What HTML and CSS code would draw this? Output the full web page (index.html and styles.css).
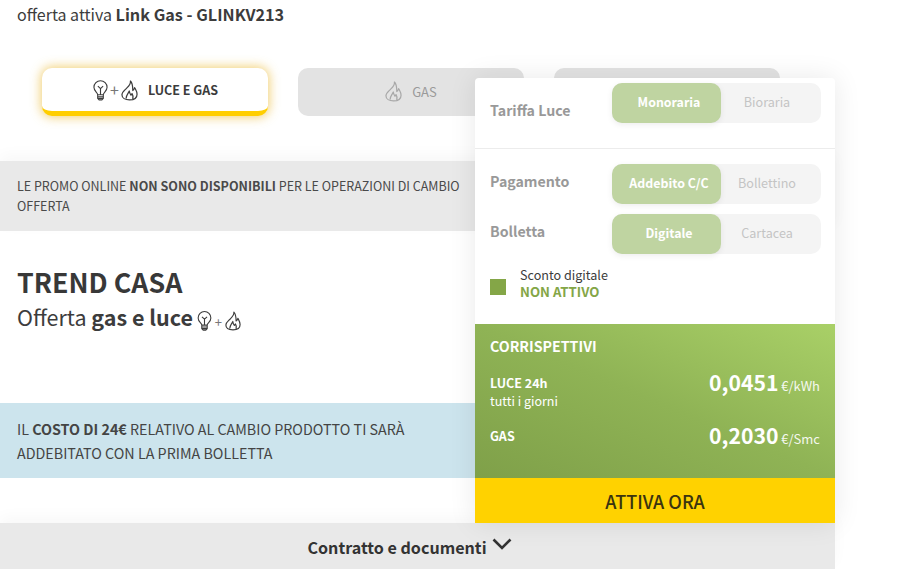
FILE: index.html
```html
<!DOCTYPE html>
<html lang="it">
<head>
<meta charset="utf-8">
<title>Trend Casa</title>
<link rel="stylesheet" href="styles.css">
</head>
<body>
<svg class="defs" width="0" height="0" aria-hidden="true">
  <symbol id="bulb" viewBox="0 0 16 22">
    <path d="M5 15.500C5 13 1 12 1 7.600a7 7 0 0 1 14 0C15 12 11 13 11 15.500Z M5 15.500V19.500L6.500 21H9.500L11 19.500V15.500 M5 17.600H11 M5 19.400H11 M8 15.500V9 M5.200 6.400 8 9 10.800 6.400" fill="none" stroke="currentColor" stroke-width="1.200" stroke-linejoin="round"/>
  </symbol>
  <symbol id="flame" viewBox="0 0 18 22">
    <path d="M10 1C10.500 4.500 8 6.500 5.500 9 3 11.500 1 13 1 15.500 1 19 4.500 21 9 21s8-2 8-6c0-3-1.500-5-2.500-7-.5 1.500-1 2.500-2 3C12.500 7 12.500 3.500 10 1Z M5.500 19C5.500 16 7.500 14.500 8.800 11.500 9 13.500 9.800 15 10.500 16 11 15.500 11.400 15 11.700 14.300 12.500 15.500 13 17 12.500 19.500" fill="none" stroke="currentColor" stroke-width="1.300" stroke-linejoin="round" stroke-linecap="round"/>
  </symbol>
</svg>
<div class="page">
  <p class="active-offer">offerta attiva <b>Link Gas - GLINKV213</b></p>

  <div class="tabs">
    <div class="tab tab-on">
      <span class="duo">
        <svg class="ico-bulb"><use href="#bulb"/></svg><span class="plus">+</span><svg class="ico-flame"><use href="#flame"/></svg>
      </span>
      <span class="tab-label">LUCE E GAS</span>
    </div>
    <div class="tab">
      <svg class="ico-flame"><use href="#flame"/></svg>
      <span class="tab-label">GAS</span>
    </div>
    <div class="tab"></div>
  </div>

  <div class="notice notice-grey">LE PROMO ONLINE <b>NON SONO DISPONIBILI</b> PER LE OPERAZIONI DI CAMBIO OFFERTA</div>

  <div class="hero">
    <h1>TREND CASA</h1>
    <p class="hero-sub">Offerta <b>gas e luce</b>
      <span class="duo duo-sm">
        <svg class="ico-bulb"><use href="#bulb"/></svg><span class="plus">+</span><svg class="ico-flame"><use href="#flame"/></svg>
      </span>
    </p>
  </div>

  <div class="notice notice-blue">IL <b>COSTO DI 24€</b> RELATIVO AL CAMBIO PRODOTTO TI SARÀ ADDEBITATO CON LA PRIMA BOLLETTA</div>

  <div class="docs">Contratto e documenti
    <svg class="chev" viewBox="0 0 20 12"><path d="M1.500 1.500 10 10l8.500-8.500" fill="none" stroke="currentColor" stroke-width="2.600"/></svg>
  </div>

  <aside class="panel">
    <div class="opts opts-top">
      <div class="opt-row">
        <span class="opt-label opt-label-low">Tariffa Luce</span>
        <div class="switch"><span class="sw sw-on">Monoraria</span><span class="sw">Bioraria</span></div>
      </div>
    </div>
    <div class="opts opts-bottom">
      <div class="opt-row">
        <span class="opt-label">Pagamento</span>
        <div class="switch"><span class="sw sw-on">Addebito C/C</span><span class="sw">Bollettino</span></div>
      </div>
      <div class="opt-row">
        <span class="opt-label">Bolletta</span>
        <div class="switch"><span class="sw sw-on">Digitale</span><span class="sw">Cartacea</span></div>
      </div>
      <div class="discount">
        <span class="check"></span>
        <div class="discount-text">Sconto digitale<b>NON ATTIVO</b></div>
      </div>
    </div>
    <div class="prices">
      <h2>CORRISPETTIVI</h2>
      <div class="price-row price-luce">
        <div class="price-name"><b>LUCE 24h</b><br>tutti i giorni</div>
        <div class="price-val"><b>0,0451</b> <span>€/kWh</span></div>
      </div>
      <div class="price-row">
        <div class="price-name"><b>GAS</b></div>
        <div class="price-val"><b>0,2030</b> <span>€/Smc</span></div>
      </div>
    </div>
    <div class="cta">ATTIVA ORA</div>
  </aside>
</div>
</body>
</html>
```
FILE: styles.css
```css
* { box-sizing: border-box; }
html, body { margin: 0; height: 100%; overflow: hidden; background: #fff; }
body {
  font-family: "Noto Sans CJK SC", "Noto Sans CJK JP", "Noto Sans", sans-serif;
  color: #3c3c3c;
}
.defs { position: absolute; }
.page { position: relative; width: 835px; height: 569px; display: flex; flex-direction: column; }
b { font-weight: 700; }

.active-offer { margin: 0; height: 30px; padding-left: 17px; font-size: 16px; line-height: 28px; }
.active-offer b { font-size: 16.200px; }

.tabs { display: flex; gap: 30px; padding: 38px 0 0 42px; height: 131px; }
.tab {
  width: 226px; height: 48px; border-radius: 10px; background: #e3e3e3;
  display: flex; align-items: center; justify-content: center; gap: 10px;
  color: #9a9a9a; font-size: 13px;
}
.tab-on {
  background: #fff; color: #3c3c3c; font-weight: 700; font-size: 12.500px;
  border-bottom: 5px solid #ffce00;
  box-shadow: 0 0 11px 1px rgba(235, 185, 50, .7);
}
.tab-label { line-height: 18px; }
.tab .ico-flame { width: 17px; height: 21px; }
.tab-on .duo { margin-left: 1px; margin-top: 1px; }
.duo { display: inline-flex; align-items: center; color: #3c3c3c; }
.tab > .ico-flame { color: #a8a8a8; margin-top: -1px; }
.ico-bulb { width: 15px; height: 21px; }
.ico-flame { width: 16px; height: 20px; }
.plus { font-size: 16px; font-weight: 400; color: #777; padding: 0 2px 2px; line-height: 1; }
.duo-sm { vertical-align: -5px; margin-left: -1px; }
.duo-sm .ico-bulb { width: 15px; height: 20px; }
.duo-sm .ico-flame { width: 16px; height: 20px; }
.duo-sm .plus { font-size: 13px; padding: 0 3px; }

.notice { padding: 0 17px; font-size: 14px; }
.notice-grey {
  height: 70px; padding-top: 15px; background: #e9e9e9; line-height: 20px; padding-right: 365px;
  box-shadow: 0 -6px 14px rgba(0, 0, 0, .03);
  font-size: 12.500px; color: #4a4a4a;
}
.notice-blue {
  height: 75px; padding-top: 14px; padding-right: 365px; background: #cce4ed; line-height: 24px; font-size: 14.300px; color: #444;
}

.hero { height: 172px; padding: 34px 0 0 17px; }
.hero h1 { margin: 0 0 1px; font-size: 26.800px; line-height: 34px; font-weight: 700; color: #383838; }
.hero-sub { margin: 0; font-size: 21.500px; line-height: 34px; color: #3c3c3c; }

.docs {
  margin-top: 45px; height: 46px; background: #e9e9e9; display: flex; align-items: center; justify-content: center;
  gap: 5px; font-size: 16.100px; font-weight: 700; color: #333; padding: 1px 16px 0 0;
  box-shadow: 0 -6px 14px rgba(0, 0, 0, .03);
}
.chev { width: 20px; height: 12px; margin-top: -5px; }

.panel {
  position: absolute; left: 475px; top: 78px; width: 360px; height: 445px;
  background: #fff; display: flex; flex-direction: column; border-radius: 4px 4px 0 0;
  box-shadow: 0 0 28px rgba(0, 0, 0, .09);
}
.opts-top { height: 71px; padding: 5px 14px 0 15px; border-bottom: 1px solid #ececec; }
.opts-bottom { height: 175px; padding: 15px 14px 0 15px; display: flex; flex-direction: column; gap: 10px; }
.opt-row { display: flex; justify-content: space-between; align-items: flex-start; }
.opt-label { font-size: 14.200px; font-weight: 700; color: #999; line-height: 22px; padding-top: 6px; }
.opt-label-low { padding-top: 16px; }
.switch { width: 209px; height: 40px; display: flex; border-radius: 10px; background: #f4f4f4; flex: none; }
.sw {
  display: flex; align-items: center; justify-content: center; font-size: 12.600px; color: #c4c4c4; flex: 1; padding: 0 8px 3px 0;
}
.sw-on {
  flex: none; width: 109px; background: #bfd4a1; color: #fff; font-weight: 700; font-size: 12.400px; border-radius: 10px;
  padding: 0 0 3px 5px;
  box-shadow: 0 2px 6px rgba(0, 0, 0, .07);
}
.discount { display: flex; align-items: center; gap: 14px; margin-top: 2px; }
.check { width: 16px; height: 16px; background: #84a647; flex: none; margin-top: 7px; }
.discount-text { font-size: 12.600px; line-height: 17px; color: #3c3c3c; }
.discount-text b { display: block; color: #84a647; font-size: 13.200px; }

.prices {
  height: 154px; padding: 12px 15px 0; color: #fff;
  background: linear-gradient(to top right, #7fa049 0%, #8fb355 50%, #a9d067 100%);
}
.prices h2 { margin: 0; font-size: 14.200px; line-height: 21px; font-weight: 700; }
.price-row { display: flex; justify-content: space-between; align-items: flex-start; }
.price-luce { margin-top: 11px; height: 53px; }
.price-name { font-size: 12.500px; line-height: 18px; padding-top: 6px; }
.price-val { font-size: 12.500px; line-height: 28px; }
.price-val b { font-size: 21.200px; }
.price-val span { font-size: 13px; opacity: .9; }

.cta {
  height: 45px; background: #ffd200; color: #3a3410; display: flex; align-items: center; justify-content: center;
  font-size: 18px; font-weight: 500;
}
```
